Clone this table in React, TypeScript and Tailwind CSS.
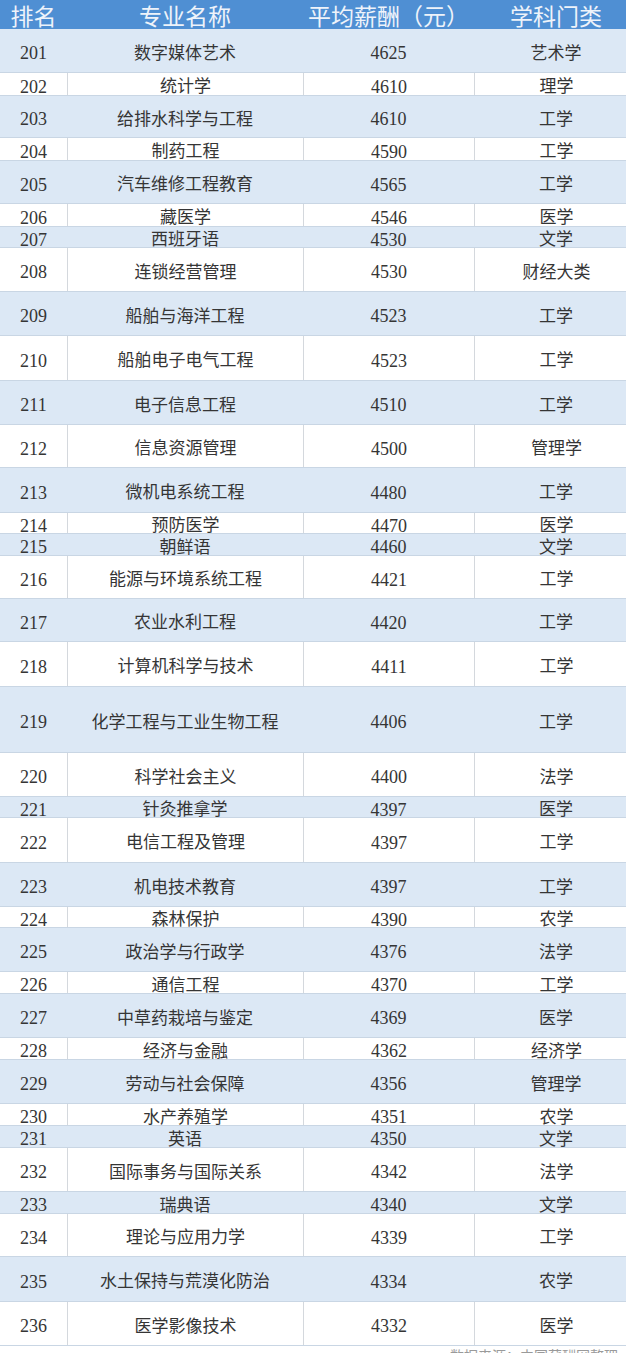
const rows: [string, string, string, string, number][] = [
  ["201", "数字媒体艺术", "4625", "艺术学", 44],
  ["202", "统计学", "4610", "理学", 23],
  ["203", "给排水科学与工程", "4610", "工学", 42],
  ["204", "制药工程", "4590", "工学", 23],
  ["205", "汽车维修工程教育", "4565", "工学", 43],
  ["206", "藏医学", "4546", "医学", 23],
  ["207", "西班牙语", "4530", "文学", 21],
  ["208", "连锁经营管理", "4530", "财经大类", 44],
  ["209", "船舶与海洋工程", "4523", "工学", 44],
  ["210", "船舶电子电气工程", "4523", "工学", 45],
  ["211", "电子信息工程", "4510", "工学", 44],
  ["212", "信息资源管理", "4500", "管理学", 43],
  ["213", "微机电系统工程", "4480", "工学", 45],
  ["214", "预防医学", "4470", "医学", 21],
  ["215", "朝鲜语", "4460", "文学", 22],
  ["216", "能源与环境系统工程", "4421", "工学", 43],
  ["217", "农业水利工程", "4420", "工学", 43],
  ["218", "计算机科学与技术", "4411", "工学", 45],
  ["219", "化学工程与工业生物工程", "4406", "工学", 66],
  ["220", "科学社会主义", "4400", "法学", 44],
  ["221", "针灸推拿学", "4397", "医学", 21],
  ["222", "电信工程及管理", "4397", "工学", 45],
  ["223", "机电技术教育", "4397", "工学", 44],
  ["224", "森林保护", "4390", "农学", 21],
  ["225", "政治学与行政学", "4376", "法学", 44],
  ["226", "通信工程", "4370", "工学", 22],
  ["227", "中草药栽培与鉴定", "4369", "医学", 44],
  ["228", "经济与金融", "4362", "经济学", 22],
  ["229", "劳动与社会保障", "4356", "管理学", 44],
  ["230", "水产养殖学", "4351", "农学", 22],
  ["231", "英语", "4350", "文学", 22],
  ["232", "国际事务与国际关系", "4342", "法学", 44],
  ["233", "瑞典语", "4340", "文学", 22],
  ["234", "理论与应用力学", "4339", "工学", 43],
  ["235", "水土保持与荒漠化防治", "4334", "农学", 45],
  ["236", "医学影像技术", "4332", "医学", 44],
];

export default function App() {
  return (
    <div className="w-[626px] h-[1353px] overflow-hidden bg-white font-['Liberation_Serif','Noto_Sans_CJK_SC',serif]">
      <div className="w-[638px]">
        {/* header */}
        <div className="flex h-[29px] bg-[#4f8fd3] text-[23px] leading-[28px] text-[#eef3fa] font-['Noto_Sans_CJK_SC',sans-serif]">
          <div className="w-[67px] flex items-center justify-center">排名</div>
          <div className="w-[236px] flex items-center justify-center">专业名称</div>
          <div className="w-[171px] flex items-center justify-center">平均薪酬（元）</div>
          <div className="w-[164px] flex items-center justify-center">学科门类</div>
        </div>

        {rows.map(([rank, name, pay, cat, h]) => {
          const blue = Number(rank) % 2 === 1;
          return (
            <div
              key={rank}
              className={`flex border-b border-[#c9d6e4] text-[17px] leading-none text-[#353535] ${
                blue ? "bg-[#dce8f5]" : "bg-white"
              }`}
              style={{ height: h }}
            >
              <div className="w-[67px] flex items-center justify-center pt-[5px] text-[18px]">{rank}</div>
              <div
                className={`w-[236px] flex items-center justify-center pt-[5px] ${
                  blue ? "" : "border-l border-[#d4d8dd]"
                }`}
              >
                {name}
              </div>
              <div
                className={`w-[171px] flex items-center justify-center pt-[5px] text-[18px] ${
                  blue ? "" : "border-l border-[#d4d8dd]"
                }`}
              >
                {pay}
              </div>
              <div
                className={`w-[164px] flex items-center justify-center pt-[5px] ${
                  blue ? "" : "border-l border-[#d4d8dd]"
                }`}
              >
                {cat}
              </div>
            </div>
          );
        })}

        {/* source note, cut off by the bottom edge as in the picture */}
        <div className="h-[8px] overflow-hidden flex justify-end pr-[20px]">
          <div className="text-[14px] leading-[20px] text-[#9a9a9a] pt-[1px]">数据来源：中国薪酬网整理</div>
        </div>
      </div>
    </div>
  );
}
